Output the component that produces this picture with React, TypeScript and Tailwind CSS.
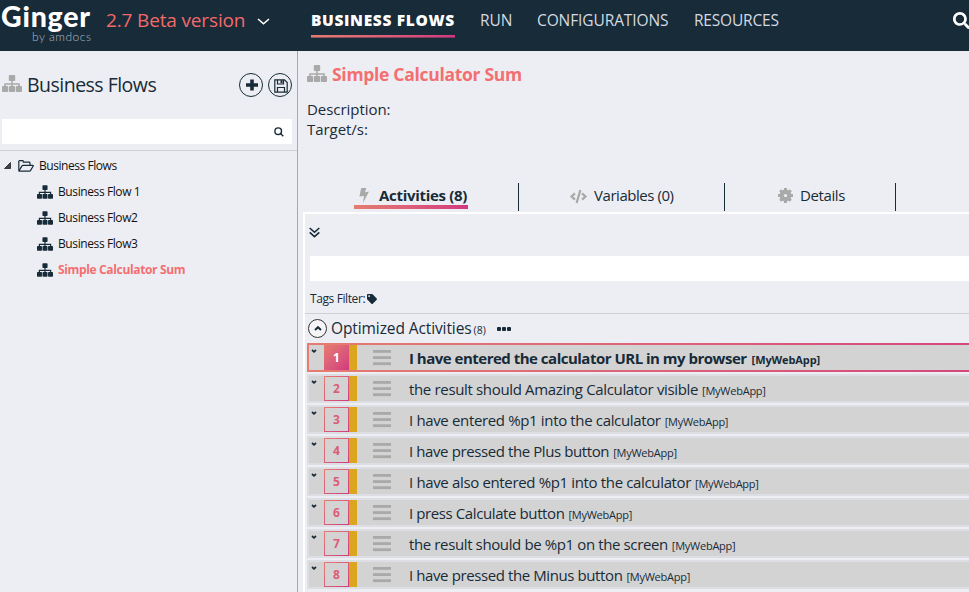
import React from "react";
import { FaSearch, FaCode, FaTag } from "react-icons/fa";

type Activity = { title: string; tracking: string };

const activities: Activity[] = [
  { title: "I have entered the calculator URL in my browser", tracking: "tracking-[-0.5px]" },
  { title: "the result should Amazing Calculator visible", tracking: "tracking-[-0.34px]" },
  { title: "I have entered %p1 into the calculator", tracking: "tracking-[-0.35px]" },
  { title: "I have pressed the Plus button", tracking: "tracking-[-0.4px]" },
  { title: "I have also entered %p1 into the calculator", tracking: "tracking-[-0.35px]" },
  { title: "I press Calculate button", tracking: "tracking-[-0.4px]" },
  { title: "the result should be %p1 on the screen", tracking: "tracking-[-0.38px]" },
  { title: "I have pressed the Minus button", tracking: "tracking-[-0.4px]" },
];

function SitemapIcon({ className, width, height }: { className?: string; width: number; height: number }) {
  return (
    <svg className={className} width={width} height={height} viewBox="0 0 20 17" fill="currentColor">
      <rect x="6.8" y="0" width="6.4" height="6" rx=".9" />
      <rect x="0" y="11" width="6.2" height="6" rx=".9" />
      <rect x="6.9" y="11" width="6.2" height="6" rx=".9" />
      <rect x="13.8" y="11" width="6.2" height="6" rx=".9" />
      <path d="M10 5V12M3 12V9H17V12" fill="none" stroke="currentColor" strokeWidth="1.5" />
    </svg>
  );
}

function FloppyIcon() {
  return (
    <svg className="mt-px ml-px" width="14" height="14" viewBox="0 0 14 14" fill="none" stroke="#172b38" strokeWidth="1.2">
      <path d="M.8.8H10.5L13.2 3.5V13.2H.8Z" />
      <path d="M3.5.8V5H9.5V.8M3.5 13V8.5H10.5V13" />
      <path d="M6.5 1.2H8.5V4.2H6.5Z" fill="#172b38" stroke="none" />
    </svg>
  );
}

function FolderIcon() {
  return (
    <svg className="mr-[5px] ml-[7px] shrink-0" width="16" height="12" viewBox="0 0 16 12" fill="none" stroke="#172b38" strokeWidth="1.2" strokeLinejoin="round">
      <path d="M.8 10.5V1.5Q.8.7 1.6.7H4.6Q5.3.7 5.3 1.5V2.2H11Q12 2.2 12 3V5.2" />
      <path d="M.9 10.9L4 5.9Q4.4 5.3 5 5.3H14.8Q15.6 5.3 15.2 6L12.6 10.4Q12.2 11.2 11.4 11.2H1.6Q.8 11.2.9 10.5" />
    </svg>
  );
}

function CogIcon() {
  return (
    <svg className="mt-[5px] mr-[7px] shrink-0" width="15" height="15" viewBox="0 0 15 15" fill="#a9a9a9">
      <path d="M6 0H9V15H6ZM0 6H15V9H0Z" />
      <path d="M6 0H9V15H6ZM0 6H15V9H0Z" transform="rotate(45 7.5 7.5)" />
      <circle cx="7.5" cy="7.5" r="5.9" />
      <circle cx="7.5" cy="7.5" r="1.6" fill="#edeef3" />
    </svg>
  );
}

function Chevron({ className, width, height, stroke, up }: { className?: string; width: number; height: number; stroke: number; up?: boolean }) {
  return (
    <svg className={className} width={width} height={height} viewBox={`0 0 ${width} ${height}`} fill="none" stroke="currentColor" strokeWidth={stroke}>
      {up ? <path d={`M1 ${height - 1}L${width / 2} 1.2L${width - 1} ${height - 1}`} /> : <path d={`M1 1L${width / 2} ${height - 1.2}L${width - 1} 1`} />}
    </svg>
  );
}

function Header() {
  return (
    <header className="flex h-[51px] shrink-0 overflow-hidden bg-[#172b38] text-[#d5d9e0]">
      <div className="w-[106px] shrink-0 pl-[1px] font-['Lato',sans-serif] text-white">
        <div className="h-[30px] text-[28.5px] leading-[33px] font-black tracking-[0.8px]">Ginger</div>
        <div className="pl-[31px] text-[12px] leading-[13px] font-light tracking-[0.5px] text-[#b4bcc4]">by amdocs</div>
      </div>
      <div className="flex h-[40px] w-[205px] shrink-0 items-center">
        <span className="w-[151px] text-[19px] leading-[38px] tracking-[-0.15px] whitespace-nowrap text-[#f4696b]">2.7 Beta version</span>
        <Chevron className="mt-[3px] text-white" width={13} height={7} stroke={1.6} />
      </div>
      <nav className="flex h-[51px] text-[15.5px] leading-[41px] whitespace-nowrap">
        <div className="w-[169px]">
          <div className="h-[35px] text-[15.5px] font-extrabold tracking-[0.65px] text-white">BUSINESS FLOWS</div>
          <div className="h-[2px] w-[144px] bg-linear-to-r from-[#e67c70] to-[#d1387f]" />
          <div className="h-px w-[144px] bg-linear-to-r from-[#8b585a] to-[#80345f]" />
        </div>
        <div className="w-[57px] tracking-[-0.1px]">RUN</div>
        <div className="w-[157px] tracking-[-0.1px]">CONFIGURATIONS</div>
        <div className="w-[259px] tracking-[-0.2px]">RESOURCES</div>
      </nav>
      <FaSearch className="mt-[12px] shrink-0 text-white" size={17} />
    </header>
  );
}

function TreeItem({ label, active }: { label: string; active?: boolean }) {
  return (
    <div className="flex h-[26px] items-center pl-[37px]">
      <SitemapIcon className="mr-[5px] shrink-0 text-[#172b38]" width={16} height={14} />
      {active ? (
        <span className="text-[12px] font-bold tracking-[-0.35px] text-[#f46f71]">{label}</span>
      ) : (
        <span className="text-[12px] tracking-[-0.4px] text-[#111]">{label}</span>
      )}
    </div>
  );
}

function Sidebar() {
  return (
    <aside className="w-[298px] shrink-0 border-r border-[#a9a9a9]">
      <div className="flex h-[68px] items-center pl-[2px]">
        <SitemapIcon className="mr-[5px] mb-[3px] shrink-0 text-[#a9a9a9]" width={20} height={17} />
        <span className="w-[212px] text-[19.5px] tracking-[-0.52px]">Business Flows</span>
        <div className="flex size-[24px] items-center justify-center rounded-full border border-[#172b38]">
          <svg className="mb-px ml-[1px]" width="12" height="12" viewBox="0 0 12 12">
            <path d="M6 .5V11.5M0 6H12" stroke="#172b38" strokeWidth="3.6" />
          </svg>
        </div>
        <div className="ml-[5px] flex size-[24px] items-center justify-center rounded-full border border-[#172b38]">
          <FloppyIcon />
        </div>
      </div>
      <div className="ml-[2px] flex h-[25px] w-[290px] items-center justify-end bg-white pr-[8px]">
        <svg width="10" height="10" viewBox="0 0 10 10" fill="none" stroke="#172b38" strokeWidth="1.4">
          <circle cx="4.2" cy="4.2" r="3.3" />
          <path d="M6 6L9.3 9.3" />
        </svg>
      </div>
      <div className="mt-[6px] h-px bg-[#d0d0d3]" />
      <div className="mt-[2px]">
        <div className="flex h-[26px] items-center pl-[4px]">
          <svg className="mb-[2px] shrink-0" width="7" height="7" viewBox="0 0 7 7">
            <path d="M6.5.5V6.5H.5Z" fill="#444" stroke="#222" strokeWidth=".8" />
          </svg>
          <FolderIcon />
          <span className="text-[12px] tracking-[-0.45px] text-[#111]">Business Flows</span>
        </div>
        <TreeItem label="Business Flow 1" />
        <TreeItem label="Business Flow2" />
        <TreeItem label="Business Flow3" />
        <TreeItem label="Simple Calculator Sum" active />
      </div>
    </aside>
  );
}

function ActivityRow({ activity, index }: { activity: Activity; index: number }) {
  const selected = index === 0;
  return (
    <div className={selected ? "mb-[2px] h-[29px] w-[800px] bg-linear-to-r from-[#e67c70] to-[#d1387f] p-[2px]" : "mb-[2px] h-[29px] w-[800px] bg-[#dddee3] p-[2px]"}>
      <div className="flex h-[25px] bg-[#d3d3d3]">
        <div className="w-[15px] shrink-0 pt-[4px] pl-[2px]">
          <Chevron width={6} height={4} stroke={1.7} />
        </div>
        <div className="size-[25px] shrink-0 bg-linear-to-br from-[#e67c70] to-[#d1387f] p-px">
          <div
            className={
              selected
                ? "flex size-[23px] items-center justify-center text-[12px] font-bold text-white"
                : "flex size-[23px] items-center justify-center bg-[#d3d3d3] text-[12px] font-bold text-[#dc5c78]"
            }
          >
            {index + 1}
          </div>
        </div>
        <div className="w-[8px] shrink-0 bg-[#dca520]" />
        <svg className="mt-[5px] ml-[16px] shrink-0" width="18" height="16" viewBox="0 0 18 16" fill="#a9a9a9">
          <rect y="0" width="18" height="2.8" />
          <rect y="6.2" width="18" height="2.8" />
          <rect y="12.3" width="18" height="2.8" />
        </svg>
        <div className={selected ? "ml-[18px] flex items-baseline leading-[27px] font-bold whitespace-nowrap" : "ml-[18px] flex items-baseline leading-[27px] whitespace-nowrap"}>
          <span className={"text-[15px] " + activity.tracking}>{activity.title}</span>
          <span className={selected ? "ml-[5px] text-[11px] font-bold tracking-[-0.1px]" : "ml-[4px] text-[11px] tracking-[-0.25px]"}>[MyWebApp]</span>
        </div>
      </div>
    </div>
  );
}

function Main() {
  return (
    <main className="min-w-0 flex-1 overflow-hidden pl-[5px]">
      <div className="pl-[4px]">
        <div className="flex h-[48px] items-center pb-[2px]">
          <SitemapIcon className="mr-[5px] mb-px shrink-0 text-[#a9a9a9]" width={20} height={17} />
          <h1 className="text-[17.5px] font-bold tracking-[-0.3px] text-[#f46f71]">Simple Calculator Sum</h1>
        </div>
        <div className="text-[15px] leading-[20px] tracking-[-0.05px]">
          <div>Description:</div>
          <div>Target/s:</div>
        </div>
      </div>
      <div className="mt-[44px] flex h-[28px] w-[593px] text-[15px] leading-[25px] whitespace-nowrap">
        <div className="w-[216px] border-r border-[#172b38] pl-[51px]">
          <div className="flex h-[22px] w-[114px] items-start">
            <svg className="mt-[5px] ml-[5px] shrink-0" width="10" height="15" viewBox="0 0 10 15" fill="#a9a9a9">
              <path d="M2.2 0H7.4L6 4.2L10 3.6L4 15L5 8L.4 8.4Z" />
            </svg>
            <span className="ml-[10px] font-bold tracking-[-0.3px]">Activities (8)</span>
          </div>
          <div className="h-[4px] w-[114px] bg-linear-to-r from-[#e67c70] to-[#d1387f]" />
        </div>
        <div className="flex w-[206px] border-r border-[#172b38] pl-[51px]">
          <FaCode className="mt-[5px] mr-[7px] text-[#a9a9a9]" size={17} />
          <span className="tracking-[-0.45px]">Variables (0)</span>
        </div>
        <div className="flex w-[171px] border-r border-[#172b38] pl-[53px]">
          <CogIcon />
          <span className="tracking-[-0.4px]">Details</span>
        </div>
      </div>
      <section className="mt-px h-[400px] w-[900px] border-2 border-white">
        <div className="h-[42px] pt-[13px] pl-[4px]">
          <svg width="11" height="11" viewBox="0 0 11 11" fill="none" stroke="#172b38" strokeWidth="1.6">
            <path d="M.7 1L5.5 5.3L10.3 1M.7 5.3L5.5 9.6L10.3 5.3" />
          </svg>
        </div>
        <div className="ml-[5px] h-[25px] bg-white" />
        <div className="flex h-[32px] items-center pt-[3px] pl-[5px] text-[12px] tracking-[-0.4px]">
          Tags Filter:
          <FaTag className="ml-[2px]" size={10} />
        </div>
        <div className="h-px bg-[#d0d0d3]" />
        <div className="flex h-[29px] items-center pl-[3px]">
          <div className="flex size-[19px] items-center justify-center rounded-full border border-[#333] bg-[#f5f5f8]">
            <Chevron width={8} height={5} stroke={2} up />
          </div>
          <div className="flex items-baseline">
            <span className="ml-[4px] text-[15.5px] tracking-[-0.1px]">Optimized Activities</span>
            <span className="ml-[2px] text-[10.5px] tracking-[0px]">(8)</span>
          </div>
          <div className="ml-[11px] flex gap-[1px]">
            <i className="size-[4px] rounded-[1px] bg-[#172b38]" />
            <i className="size-[4px] rounded-[1px] bg-[#172b38]" />
            <i className="size-[4px] rounded-[1px] bg-[#172b38]" />
          </div>
        </div>
        <div className="ml-[2px]">
          {activities.map((a, i) => (
            <ActivityRow key={a.title} activity={a} index={i} />
          ))}
        </div>
      </section>
    </main>
  );
}

export default function App() {
  return (
    <div className="flex h-[592px] w-[969px] flex-col overflow-hidden bg-[#edeef3] font-['Open_Sans','Noto_Sans',sans-serif] text-[#172b38]">
      <Header />
      <div className="flex min-h-0 flex-1">
        <Sidebar />
        <Main />
      </div>
    </div>
  );
}
